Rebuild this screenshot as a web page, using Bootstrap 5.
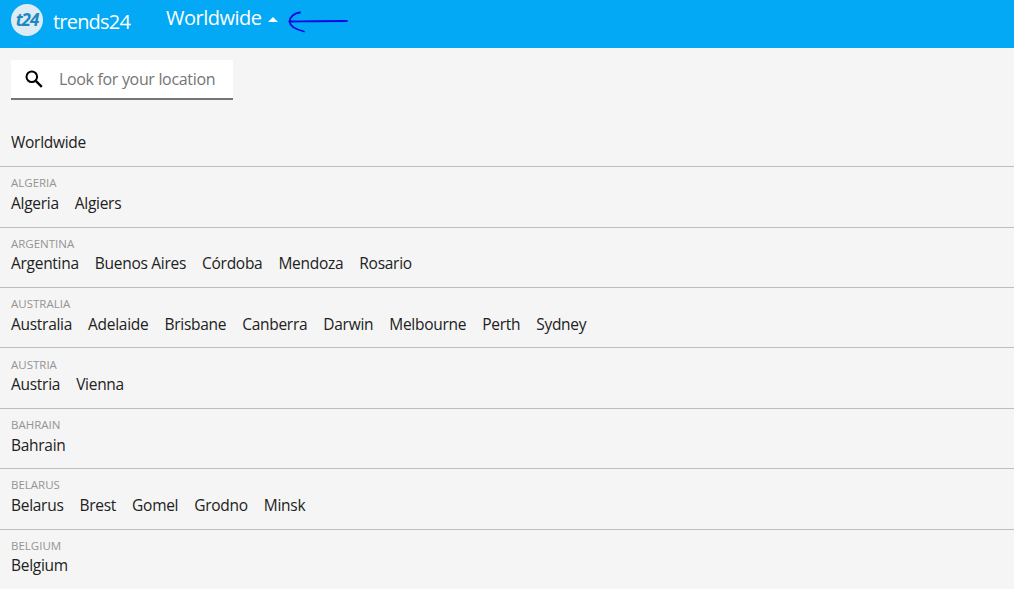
<!DOCTYPE html>
<html lang="en"><head><meta charset="utf-8"><title>trends24</title>
<link href="https://cdn.jsdelivr.net/npm/bootstrap@5.3.0/dist/css/bootstrap.min.css" rel="stylesheet">
<style>
html,body{height:589px;overflow:hidden}
body{background:#f5f5f5;font-family:"Open Sans","Noto Sans",sans-serif;color:#212121;font-size:15.5px;letter-spacing:-.28px}
.topbar{height:48px;background:#03a9f4;color:#fff}
.logo-mark{width:32px;height:32px;background:#dcebf4;color:#1b88c0;font:italic 700 17px/32px "Open Sans",sans-serif;letter-spacing:-1px;text-align:center;margin-left:11px;margin-top:-8px}
.brand-name{font-size:20px;margin-left:10px;letter-spacing:-.8px;width:113px;line-height:1;margin-top:-5px}
.scope{font-size:20px;line-height:1;letter-spacing:-.5px;margin-top:-12px}
.caret-up{width:0;height:0;border:5px solid transparent;border-top:0;border-bottom-color:#fff;margin-left:7px;margin-top:-10px}
.arrow{margin-left:10px;margin-top:-6px}
.finder{width:222px;height:40px;margin:12px 0 0 11px;background:#fff;border-bottom:2px solid #757575;padding-left:14px;gap:14px}
.finder svg{margin-left:-1px;margin-right:1px}
.finder input{border:0;outline:0;background:none;width:170px;font-size:16px;letter-spacing:-.33px;padding:0;color:#212121}
.finder input::placeholder{color:#757575;opacity:1}
.places{margin:0;padding:0;list-style:none}
.place{padding:0 0 0 11px;border-bottom:1px solid #bdbdbd;height:60.4px}
.place:first-child{height:67.3px;padding-top:30px}
.place:last-child{border:0}
.region{font-size:11.5px;line-height:14px;color:#949494;padding-top:9.2px;letter-spacing:0;box-sizing:content-box;height:14.5px}
.towns{gap:16px;line-height:24px}
.towns a{color:#212121;text-decoration:none}
</style></head><body>
<header class="topbar d-flex align-items-center">
<div class="logo-mark rounded-circle">t24</div>
<div class="brand-name">trends24</div>
<div class="scope">Worldwide</div>
<div class="caret-up"></div>
<svg class="arrow" width="60" height="26" viewBox="0 0 60 26" fill="none" stroke="#0a0ae0" stroke-width="1.8" stroke-linecap="round" stroke-linejoin="round"><path d="M1.5 13.5C10 13.5 30 13 59 13"/><path d="M12 4.5C6 5 2 9 1.5 13.5C2 19 8 21.5 16 23.5"/></svg>
</header>
<div class="finder d-flex align-items-center">
<svg width="20" height="20" viewBox="0 0 20 20" fill="none" stroke="#000" stroke-width="2"><circle cx="7.8" cy="7.8" r="5.3"/><path d="M11.8 11.8l6 6" stroke-width="2.4"/></svg>
<input type="text" placeholder="Look for your location" aria-label="Look for your location">
</div>
<ul class="places">
<li class="place"><div class="towns d-flex"><a href="#">Worldwide</a></div></li>
<li class="place"><div class="region">ALGERIA</div><div class="towns d-flex"><a href="#">Algeria</a><a href="#">Algiers</a></div></li>
<li class="place"><div class="region">ARGENTINA</div><div class="towns d-flex"><a href="#">Argentina</a><a href="#">Buenos Aires</a><a href="#">Córdoba</a><a href="#">Mendoza</a><a href="#">Rosario</a></div></li>
<li class="place"><div class="region">AUSTRALIA</div><div class="towns d-flex"><a href="#">Australia</a><a href="#">Adelaide</a><a href="#">Brisbane</a><a href="#">Canberra</a><a href="#">Darwin</a><a href="#">Melbourne</a><a href="#">Perth</a><a href="#">Sydney</a></div></li>
<li class="place"><div class="region">AUSTRIA</div><div class="towns d-flex"><a href="#">Austria</a><a href="#">Vienna</a></div></li>
<li class="place"><div class="region">BAHRAIN</div><div class="towns d-flex"><a href="#">Bahrain</a></div></li>
<li class="place"><div class="region">BELARUS</div><div class="towns d-flex"><a href="#">Belarus</a><a href="#">Brest</a><a href="#">Gomel</a><a href="#">Grodno</a><a href="#">Minsk</a></div></li>
<li class="place"><div class="region">BELGIUM</div><div class="towns d-flex"><a href="#">Belgium</a></div></li>
</ul>
<script src="https://cdn.jsdelivr.net/npm/bootstrap@5.3.0/dist/js/bootstrap.bundle.min.js"></script>
</body></html>
